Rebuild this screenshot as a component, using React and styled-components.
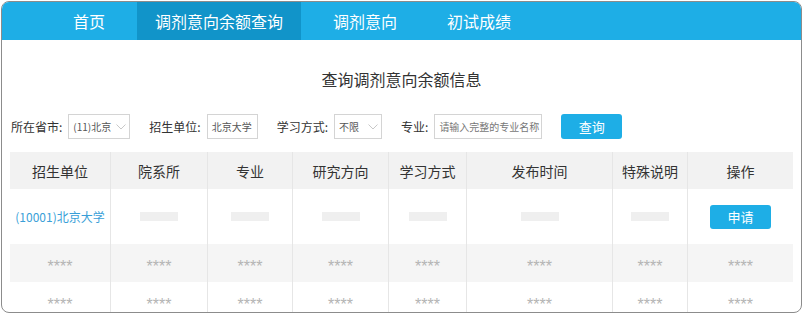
import React from 'react';
import styled, { createGlobalStyle } from 'styled-components';

const GlobalStyle = createGlobalStyle`
    html, body {
        margin: 0;
        padding: 0;
        background: #ffffff;
        font-family: "Noto Sans CJK SC", "Noto Sans", sans-serif;
    }
`;

const Frame = styled.div`
    margin: 1px;
    width: 801px;
    height: 312px;
    box-sizing: border-box;
    border: 1px solid #8c8c8c;
    border-radius: 8px;
    overflow: hidden;
    background: #ffffff;
`;

const Nav = styled.nav`
    height: 38px;
    background: #1eaee6;
    display: flex;
    align-items: stretch;
    padding-left: 53px;
    gap: 14px;
`;

const Tab = styled.div`
    display: flex;
    align-items: center;
    padding: 0 18px;
    font-size: 16px;
    color: #ffffff;
    background: ${({ $active }) => ($active ? '#1194c9' : 'transparent')};
`;

const Content = styled.section`
    padding: 0 8px;
`;

const Title = styled.h2`
    margin: 0;
    padding-top: 28px;
    height: 22px;
    line-height: 22px;
    font-size: 16px;
    font-weight: normal;
    color: #333333;
    text-align: center;
`;

const Filters = styled.div`
    display: flex;
    align-items: center;
    margin-top: 24px;
    padding-left: 1px;
    height: 25px;
`;

const Field = styled.label`
    display: flex;
    align-items: center;
    gap: 6px;
    margin-right: 19px;
    font-size: 12px;
    color: #333333;
`;

const Box = styled.div`
    box-sizing: border-box;
    width: ${({ $w }) => $w}px;
    height: 25px;
    border: 1px solid #d4d4d4;
    display: flex;
    align-items: center;
    justify-content: space-between;
    padding: 0 3px 0 4px;
    font-size: 10px;
    color: ${({ $placeholder }) => ($placeholder ? '#777777' : '#555555')};
    white-space: nowrap;
    overflow: hidden;
`;

const Chevron = () => (
    <svg width="10" height="6" viewBox="0 0 10 6">
        <polyline points="0.5,0.5 5,5 9.5,0.5" fill="none" stroke="#c8c8c8" strokeWidth="1" />
    </svg>
);

const Button = styled.button`
    width: 61px;
    height: ${({ $h }) => $h || 25}px;
    border: 0;
    border-radius: 3px;
    background: #1eaee6;
    color: #ffffff;
    font-family: inherit;
    font-size: 13px;
    padding: 0;
    cursor: pointer;
`;

const Table = styled.div`
    margin-top: 13px;
    width: 783px;
`;

const COLS = '100px 97px 85px 96px 78px 146px 75px 106px';

const Row = styled.div`
    display: grid;
    grid-template-columns: ${COLS};
    height: ${({ $h }) => $h}px;
    background: ${({ $bg }) => $bg || '#ffffff'};
`;

const Cell = styled.div`
    display: flex;
    align-items: center;
    justify-content: center;
    border-left: 1px solid #e6e6e6;
    font-size: 14px;
    color: #333333;
    white-space: nowrap;

    &:first-child {
        border-left: 0;
    }
`;

const Stars = styled.span`
    font-family: "Liberation Sans", Arial, sans-serif;
    font-size: 16px;
    color: #b4b4b4;
    transform: translateY(4px);
`;

const SchoolLink = styled.a`
    font-size: 12px;
    color: #3a9fd8;
    text-decoration: none;
`;

const Blur = styled.span`
    width: 38px;
    height: 9px;
    background: #efefef;
`;

const headers = ['招生单位', '院系所', '专业', '研究方向', '学习方式', '发布时间', '特殊说明', '操作'];

const App = () => {
    return (
        <>
            <GlobalStyle />
            <Frame>
                <Nav>
                    <Tab>首页</Tab>
                    <Tab $active>调剂意向余额查询</Tab>
                    <Tab>调剂意向</Tab>
                    <Tab>初试成绩</Tab>
                </Nav>
                <Content>
                    <Title>查询调剂意向余额信息</Title>
                    <Filters>
                        <Field>
                            所在省市:
                            <Box $w={62}>(11)北京<Chevron /></Box>
                        </Field>
                        <Field>
                            招生单位:
                            <Box $w={51}>北京大学</Box>
                        </Field>
                        <Field>
                            学习方式:
                            <Box $w={48}>不限<Chevron /></Box>
                        </Field>
                        <Field>
                            专业:
                            <Box $w={108} $placeholder>请输入完整的专业名称</Box>
                        </Field>
                        <Button>查询</Button>
                    </Filters>
                    <Table>
                        <Row $h={37} $bg="#f2f2f2">
                            {headers.map((h) => (
                                <Cell key={h}>{h}</Cell>
                            ))}
                        </Row>
                        <Row $h={55}>
                            <Cell><SchoolLink href="#">(10001)北京大学</SchoolLink></Cell>
                            {[0, 1, 2, 3, 4, 5].map((i) => (
                                <Cell key={i}><Blur /></Cell>
                            ))}
                            <Cell><Button $h={24}>申请</Button></Cell>
                        </Row>
                        <Row $h={38} $bg="#f5f5f5">
                            {headers.map((h) => (
                                <Cell key={h}><Stars>****</Stars></Cell>
                            ))}
                        </Row>
                        <Row $h={38}>
                            {headers.map((h) => (
                                <Cell key={h}><Stars>****</Stars></Cell>
                            ))}
                        </Row>
                    </Table>
                </Content>
            </Frame>
        </>
    );
};

export default App;
